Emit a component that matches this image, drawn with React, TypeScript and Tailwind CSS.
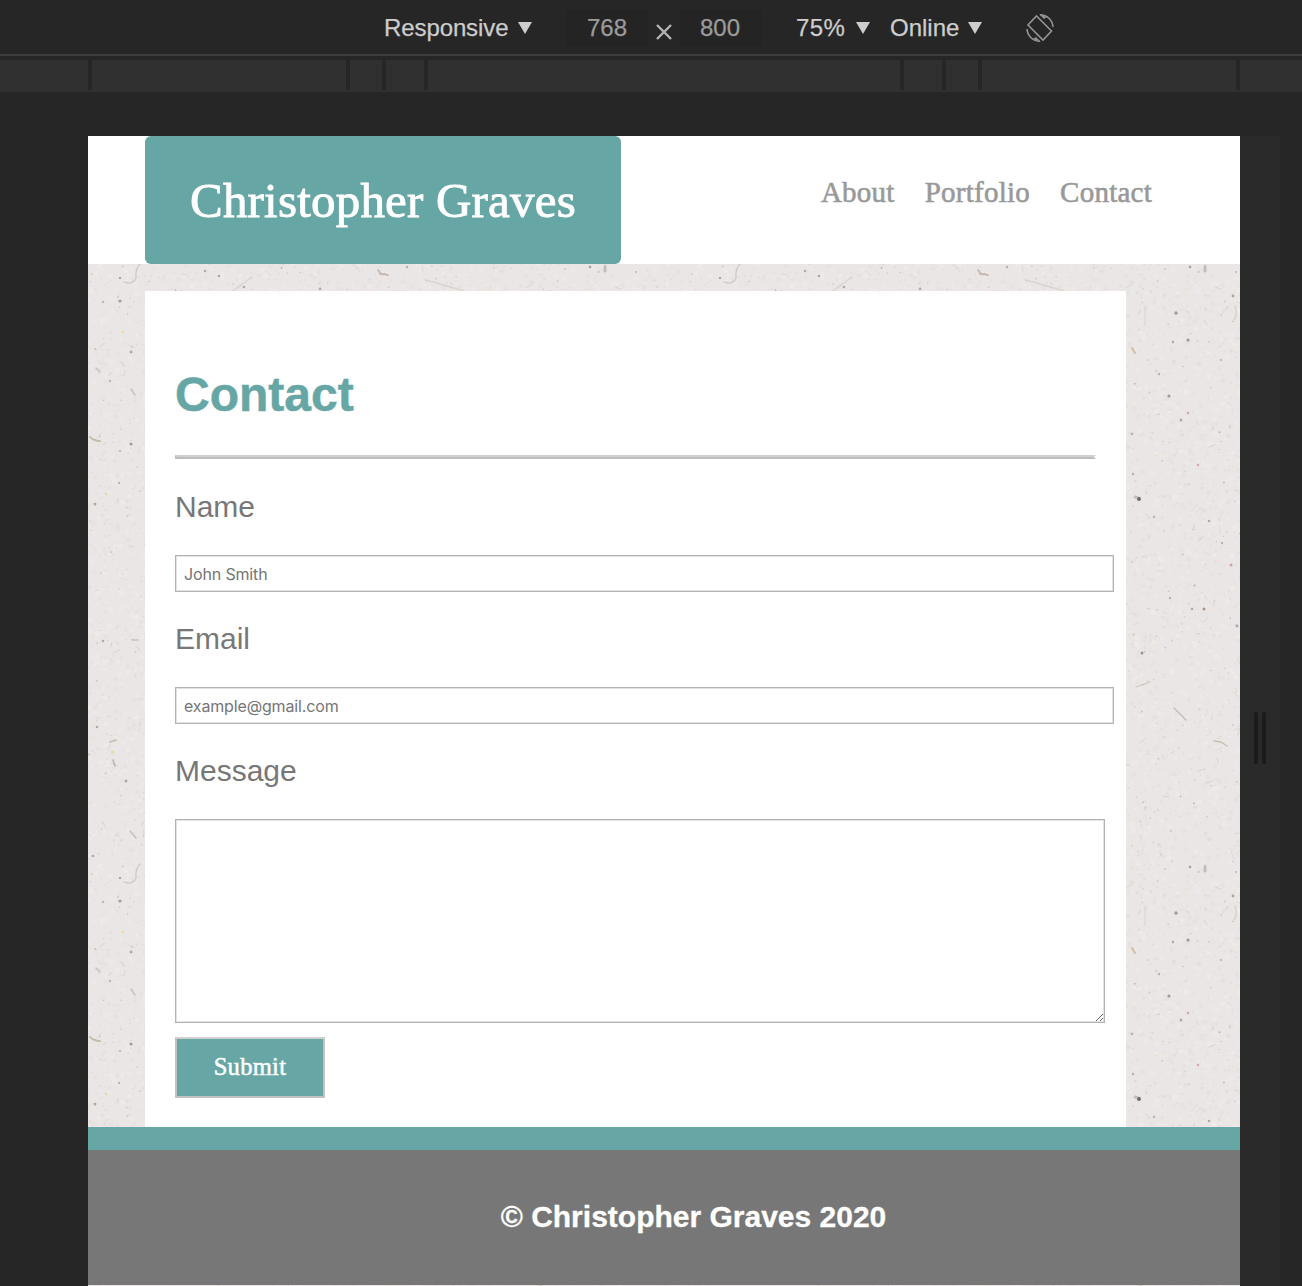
import React from "react";

type Speck = { x: number; y: number; r: number; c: string; o: number };

function makeRandom(seed: number) {
  let s = seed;
  return () => {
    s = (s + 0x6d2b79f5) | 0;
    let t = Math.imul(s ^ (s >>> 15), 1 | s);
    t = (t + Math.imul(t ^ (t >>> 7), 61 | t)) ^ t;
    return ((t ^ (t >>> 14)) >>> 0) / 4294967296;
  };
}

const rnd = makeRandom(77);
const tints = ["#8a8380", "#a8a09a", "#b98f6a", "#f0cf74", "#7c7a80", "#c9a0a0", "#f3d88c", "#989296"];
const specks: Speck[] = Array.from({ length: 3600 }, () => ({
  x: rnd() * 600,
  y: rnd() * 600,
  r: 0.5 + rnd() * rnd() * 0.7,
  c: tints[Math.floor(rnd() * tints.length)],
  o: 0.12 + rnd() * rnd() * 0.5,
}));
const mottles: Speck[] = Array.from({ length: 5000 }, () => ({
  x: rnd() * 600,
  y: rnd() * 600,
  r: 1 + rnd() * 1.6,
  c: rnd() > 0.5 ? "#f4f3f1" : "#dcd6d4",
  o: 0.25,
}));
const fibres = Array.from({ length: 220 }, () => {
  const a = rnd() * Math.PI;
  const l = 3 + rnd() * 6;
  return {
    d: `M${rnd() * 600} ${rnd() * 600}q${Math.cos(a) * l * 0.5 + 1} ${Math.sin(a) * l * 0.5} ${Math.cos(a) * l} ${Math.sin(a) * l}`,
    o: 0.1 + rnd() * 0.15,
  };
});

// Distinct flecks as x, y, radius and colour, in tile coordinates.
const flecks: [number, number, number, string][] = [
  [488, 177, 1.7, "#77706e"], [500, 204, 1.5, "#666"], [481, 260, 1.6, "#7c706c"],
  [493, 284, 1.5, "#8f8b88"], [485, 206, 1.2, "#888"], [471, 238, 1.2, "#999"],
  [454, 517, 1.5, "#666"], [504, 473, 1.3, "#a08070"], [516, 473, 1.5, "#8b6c55"],
  [543, 429, 1.5, "#c27f7f"], [510, 329, 1.3, "#c88a8a"], [521, 385, 1.2, "#888"],
  [545, 160, 1.4, "#8c7c6c"], [482, 612, 1.2, "#999"], [549, 490, 1.4, "#888"],
  [534, 407, 1.2, "#999"], [500, 277, 1.2, "#c27f7f"], [533, 224, 1.1, "#99a"],
  [444, 298, 1.3, "#999"], [445, 338, 1.2, "#999"], [466, 381, 1.2, "#999"],
  [482, 462, 1.2, "#999"], [32, 165, 1.6, "#777"], [15, 166, 1.2, "#b99494"],
  [43, 216, 1.4, "#888"], [22, 245, 1.2, "#999"], [43, 308, 1.6, "#777"],
  [32, 315, 1.1, "#999"], [31, 347, 1.2, "#999"], [7, 368, 1.5, "#998878"],
  [18, 358, 1.3, "#f0cf74"], [15, 505, 1.3, "#888"], [9, 591, 1.2, "#888"],
  [38, 45, 1.5, "#888"], [5, 120, 1.3, "#888"], [24, 16, 1.3, "#f0cf74"],
  [32, 142, 1.2, "#888"], [117, 135, 1.2, "#888"], [131, 140, 1.3, "#888"],
  [156, 151, 1.3, "#888"], [232, 153, 1.3, "#888"], [319, 131, 1.3, "#9a9a8f"],
  [502, 131, 1.3, "#777"], [35, 196, 1.2, "#f0cf74"],
];

function PaperTexture() {
  return (
    <svg className="absolute inset-0 size-full" aria-hidden="true">
      <defs>
        <pattern id="paper" width="600" height="600" patternUnits="userSpaceOnUse">
          <rect width="600" height="600" fill="#eae6e5" />
          {mottles.map((s, i) => (
            <circle key={i} cx={s.x} cy={s.y} r={s.r} fill={s.c} opacity={s.o} />
          ))}
          <g fill="none" strokeWidth="1.2" stroke="#a79d98">
            {fibres.map((f, i) => (
              <path key={i} d={f.d} opacity={f.o} />
            ))}
          </g>
          {specks.map((s, i) => (
            <circle key={i} cx={s.x} cy={s.y} r={s.r} fill={s.c} opacity={s.o} />
          ))}
          {flecks.map(([x, y, r, c], i) => (
            <circle key={i} cx={x} cy={y} r={r} fill={c} opacity="0.65" />
          ))}
          <g fill="none" strokeLinecap="round" opacity=".8">
            <path d="M290 134l3 4l7 1M297 138l-5 0" stroke="#b09a8a" strokeWidth="2" opacity=".7" />
            <path d="M486 572l12 12" stroke="#a9a4a4" strokeWidth="1.4" opacity=".8" />
            <path d="M447 361l3 1" stroke="#888" strokeWidth="3" opacity=".5" />
            <circle cx="451" cy="363" r="2" fill="#505050" stroke="none" />
            <path d="M526 605l7 1l6 4" stroke="#a58f78" strokeWidth="1.4" opacity=".6" />
            <path d="M526 5l7 1l6 4" stroke="#a58f78" strokeWidth="1.4" opacity=".6" />
            <path d="M444 212l3 5" stroke="#b28f66" strokeWidth="2" opacity=".6" />
            <path d="M448 551l14-5" stroke="#b7a391" strokeWidth="1.3" opacity=".6" />
            <path d="M547 170q3 7-1 14" stroke="#c4a99b" strokeWidth="1.4" opacity=".5" />
            <path d="M457 170v20" stroke="#aaa" strokeWidth="1" opacity=".4" />
            <path d="M517 130v5" stroke="#827c86" strokeWidth="3" opacity=".5" />
            <path d="M36 146q9 3 12-4q-1-8 4-14" stroke="#a5a3a8" strokeWidth="1.5" opacity=".5" />
            <path d="M142 157l22-16M338 144l38 11" stroke="#aaa49a" strokeWidth="1.5" opacity=".35" />
            <path d="M2 301q4 4 10 4M22 6l6-2" stroke="#aa9a80" strokeWidth="1.8" opacity=".7" />
            <path d="M8 232l4 4M43 253l4 6M42 95l6 7M44 504h6" stroke="#8f8a84" strokeWidth="1.5" opacity=".5" />
            <path d="M25 24l2 6" stroke="#8f8a84" strokeWidth="1.8" opacity=".6" />
          </g>
        </pattern>
      </defs>
      <rect width="100%" height="100%" fill="url(#paper)" />
    </svg>
  );
}

const Caret = () => (
  <svg width="14" height="12" viewBox="0 0 14 12" fill="#cdcdcd">
    <path d="M0 0h14L7 12z" />
  </svg>
);

const Tick = ({ className }: { className: string }) => <i className={`h-[30px] w-1 bg-[#262626] ${className}`} />;

function Toolbar() {
  return (
    <div className="flex h-[54px] items-center bg-[#262626] pl-[384px] pt-0.5 font-['Liberation_Sans'] text-[24px] leading-9 text-[#cdcdcd] [-webkit-text-stroke:0.25px_currentColor]">
      <span className="w-[134px] whitespace-nowrap tracking-[-0.1px]">Responsive</span>
      <Caret />
      <span className="ml-[34px] h-9 w-[82px] bg-[#242424] text-center text-[#9b9b9b]">768</span>
      <svg className="ml-2 mt-2" width="16" height="16" viewBox="0 0 16 16" stroke="#b5b5b5" strokeWidth="2.4">
        <path d="M1 1l14 14M15 1L1 15" />
      </svg>
      <span className="ml-2 h-9 w-[82px] bg-[#242424] pr-0.5 text-center text-[#9b9b9b]">800</span>
      <span className="ml-8 w-[62px] pl-0.5 tracking-[0.4px]">75%</span>
      <Caret />
      <span className="ml-5 w-[78px]">Online</span>
      <Caret />
      <svg className="ml-[43px]" width="30" height="30" viewBox="0 0 30 30" fill="none" stroke="#949494" strokeWidth="1.6">
        <path d="M11.500 3L26.500 18L18 27L3 12z" />
        <path d="M15 1.700A13 13 0 0 1 28 14M15 28.300A13 13 0 0 1 2 16" />
        <path d="M14 1l8 3l-3 2zM16 29l-8-3l3-2z" fill="#949494" stroke="none" />
      </svg>
    </div>
  );
}

function Field({ label, placeholder }: { label: string; placeholder: string }) {
  return (
    <label className="block h-[132px]">
      <span className="block h-[66px] text-[30px] leading-[36px]">{label}</span>
      <span className="block h-[37px] w-[939px] border border-[#b3b3b3] shadow-[inset_0_0_0_1px_#e2e2e2]">
        <input
          className="block size-full px-2 pt-px font-[Inter] text-[16px] tracking-[-0.15px] placeholder:text-[#757575]"
          placeholder={placeholder}
        />
      </span>
    </label>
  );
}

export default function App() {
  return (
    <div className="h-[1286px] w-[1302px] overflow-hidden bg-[#262626]">
      <Toolbar />
      <div className="h-[38px] border-t-2 border-[#3d3d3d]">
        <div className="mt-1 flex h-8 bg-[#303030]">
          <Tick className="ml-[88px]" />
          <Tick className="ml-[254px]" />
          <Tick className="ml-8" />
          <Tick className="ml-[38px]" />
          <Tick className="ml-[472px]" />
          <Tick className="ml-[38px]" />
          <Tick className="ml-8" />
          <Tick className="ml-[254px]" />
        </div>
      </div>
      <div className="mt-11 flex h-[1150px] pl-[88px]">
        <div className="relative w-[1152px] shrink-0">
          <PaperTexture />
          <div className="relative">
            <header className="flex h-[127.5px] justify-between bg-white pl-[57px] pr-[88px] font-['Liberation_Serif']">
              <div className="w-[475.500px] whitespace-nowrap rounded-[6px] bg-[#66a7a5] pl-[45px] text-[49px] leading-[130px] tracking-[0.2px] text-white [-webkit-text-stroke:0.9px_white]">
                Christopher Graves
              </div>
              <nav className="flex gap-[30px] pt-[38px] text-[29px] leading-9 tracking-[0.25px] text-[#999] [-webkit-text-stroke:0.6px_#999]">
                <a>About</a>
                <a>Portfolio</a>
                <a>Contact</a>
              </nav>
            </header>
            <main className="ml-[57px] mt-[27px] h-[836.500px] w-[981px] bg-white px-[30px] pt-[76.500px] font-['Liberation_Sans'] text-[#777]">
              <h1 className="h-[88px] text-[48px] font-bold leading-[56px] text-[#66a7a5] [-webkit-text-stroke:0.5px_#66a7a5]">Contact</h1>
              <div className="mb-[29.500px] h-1 w-[921px] border-2 border-b-[#bdbdbd] border-l-[#bdbdbd] border-r-white border-t-[#d0d0d0]" />
              <Field label="Name" placeholder="John Smith" />
              <Field label="Email" placeholder="example@gmail.com" />
              <label className="block">
                <span className="block h-[66px] text-[30px] leading-[36px]">Message</span>
                <textarea className="block h-[204px] w-[930px] resize border border-[#b3b3b3] shadow-[inset_0_0_0_1px_#e2e2e2]" />
              </label>
              <button className="mt-[14px] h-[61px] w-[150px] border-2 border-[#c3c3c3] border-t-[#cfcfcf] bg-[#66a7a5] font-['Liberation_Serif'] text-[24.500px] tracking-[0.3px] text-white [-webkit-text-stroke:0.5px_white]">
                Submit
              </button>
            </main>
            <footer className="h-[158px] border-t-[23px] border-[#66a7a5] bg-[#777] pl-[59px] pt-12 text-center font-['Liberation_Sans'] text-[30px] font-bold leading-[38px] text-white [-webkit-text-stroke:0.3px_white]">
              © Christopher Graves 2020
            </footer>
          </div>
        </div>
        <div className="flex w-10 items-start justify-center gap-1 bg-[#2a2a2a] pt-[576px]">
          <i className="h-[52px] w-1 rounded-full bg-[#1b1b1b]" />
          <i className="h-[52px] w-1 rounded-full bg-[#1b1b1b]" />
        </div>
      </div>
    </div>
  );
}
